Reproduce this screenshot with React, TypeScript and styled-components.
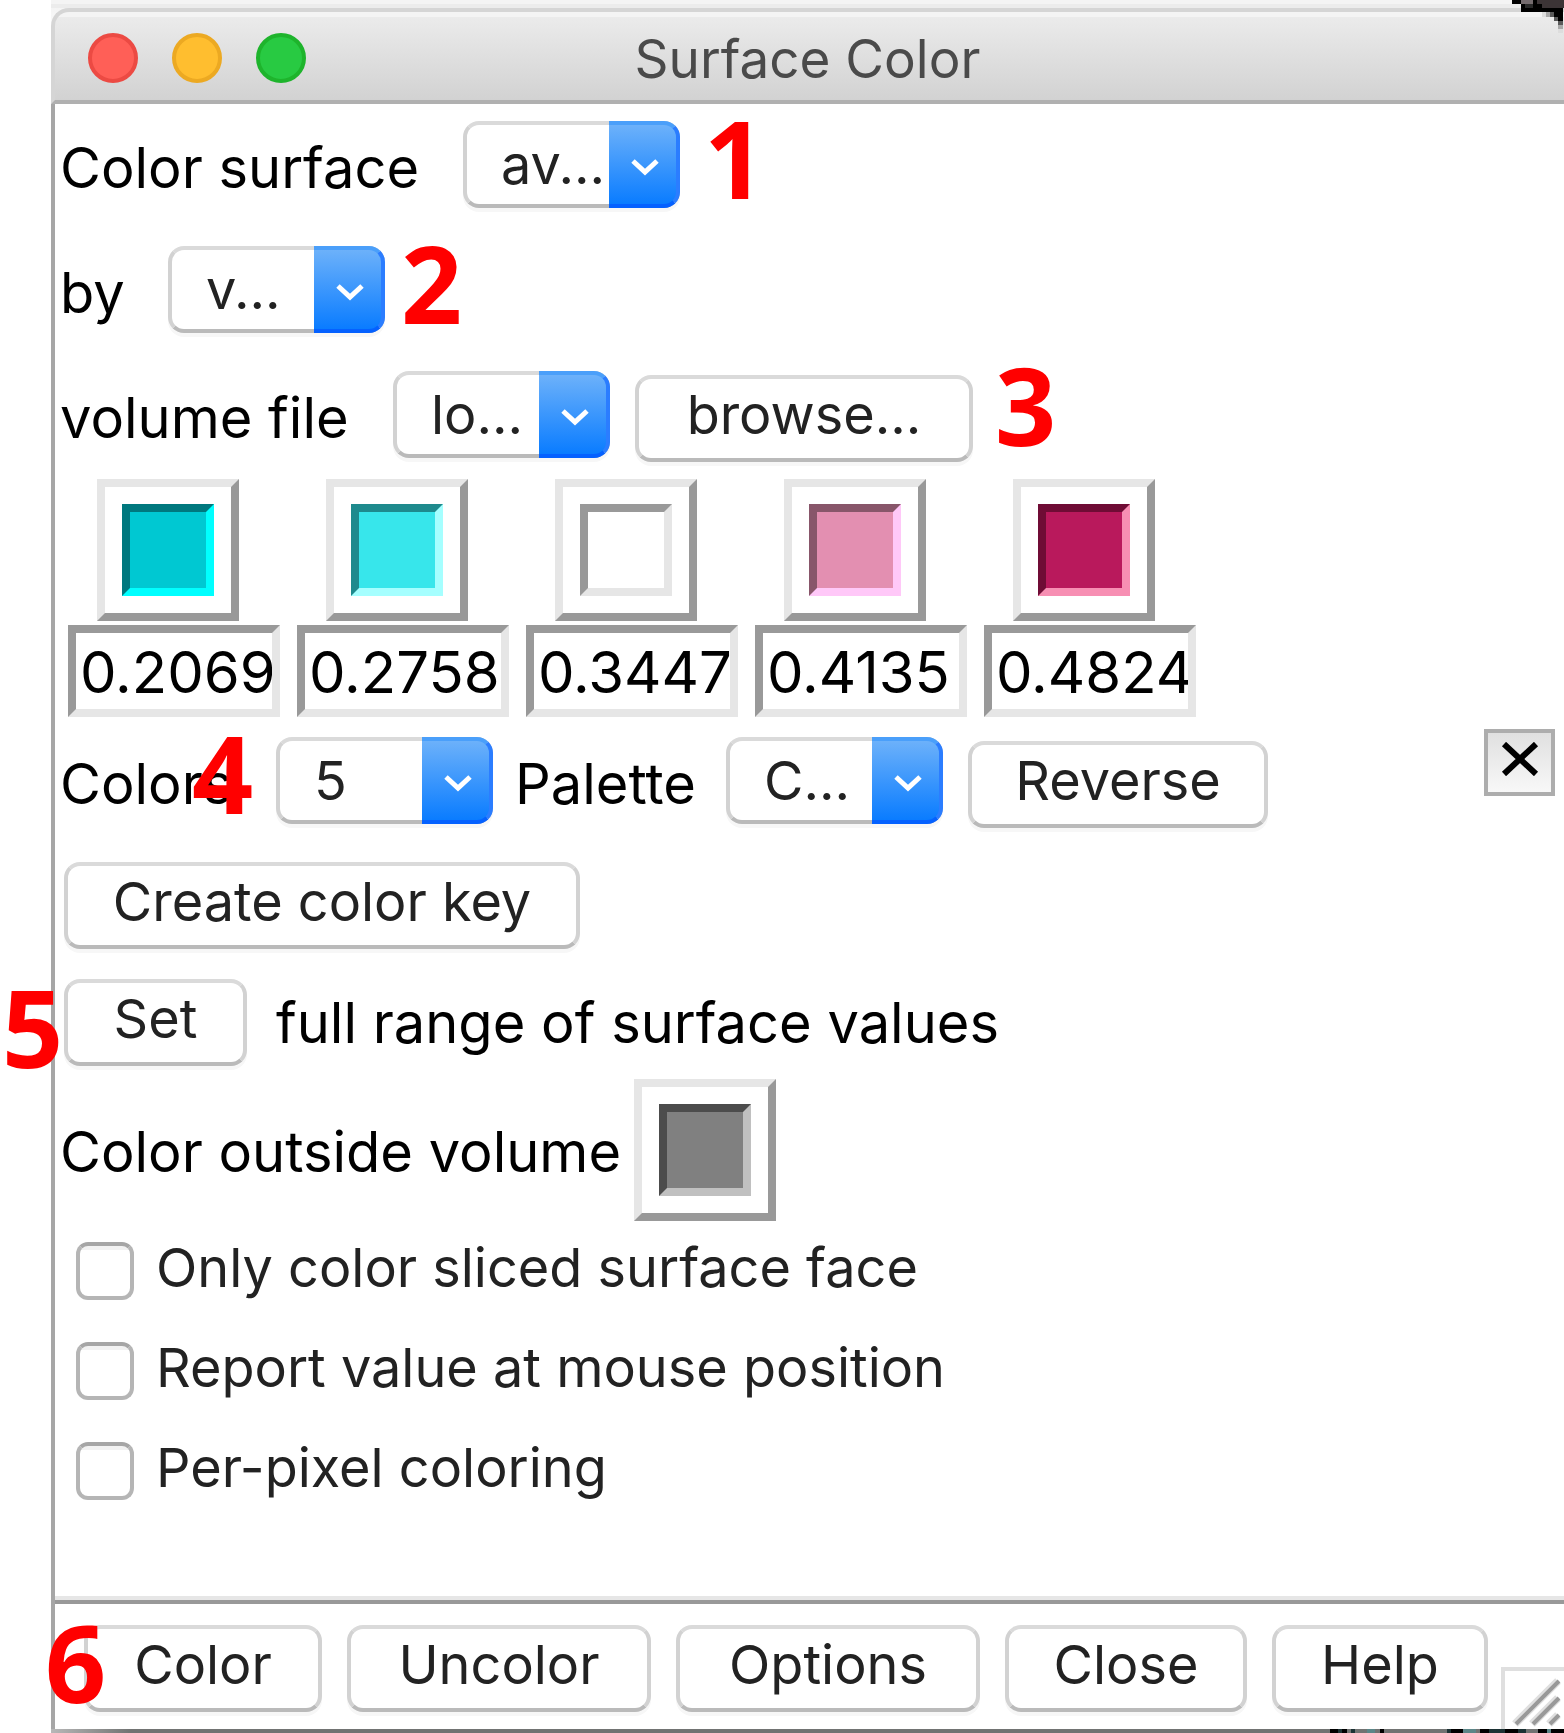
import React, { useState } from "react";
import styled, { createGlobalStyle } from "styled-components";

const GlobalStyle = createGlobalStyle`
  *, *::before, *::after { box-sizing: border-box; }
  body { margin: 0; background: #ffffff; }
  button, input, select { font: inherit; }
`;

const Page = styled.div`
  position: relative;
  overflow: hidden;
  min-height: 100vh;
  display: flex;
  padding-left: 51px;
  font-family: Inter, "Liberation Sans", sans-serif;
  font-size: 54px;
  line-height: 64px;
  color: #000000;
`;

const Window = styled.main`
  flex: 1;
  min-width: 0;
  display: flex;
  flex-direction: column;
  padding-top: 8px;
  background: linear-gradient(#f4f4f4 0 4px, #ececec 4px 8px, #f4f4f4 8px, #ffffff 40px);
`;

const TitleBar = styled.header`
  position: relative;
  display: flex;
  align-items: center;
  justify-content: center;
  height: 96px;
  padding: 6px 4px 0 0;
  border: 4px solid #d5d5d5;
  border-right: 0;
  border-bottom-color: #b0b0b0;
  border-radius: 18px 0 0 0;
  background: linear-gradient(#f4f4f4 0 5px, #ebebeb 5px, #d2d2d2);
`;

const Title = styled.h1`
  margin: 0;
  font-size: 53px;
  font-weight: 400;
  line-height: 64px;
  color: #4a4a4a;
`;

const Lights = styled.div`
  position: absolute;
  left: 33px;
  top: 21px;
  display: flex;
  gap: 34px;
`;

const Light = styled.button<{ $fill: string; $edge: string }>`
  width: 50px;
  height: 50px;
  padding: 0;
  border: 4px solid ${(p) => p.$edge};
  border-radius: 50%;
  background: ${(p) => p.$fill};
`;

const Body = styled.div`
  flex: 1;
  display: flex;
  flex-direction: column;
  border-left: 4px solid #a6a6a6;
  background: #ffffff;
`;

const Form = styled.form`
  flex: 1;
  display: flex;
  flex-direction: column;
  padding: 17px 9px 96px 2px;
`;

const Row = styled.div`
  display: flex;
  align-items: flex-start;
  min-height: 91px;
  margin-bottom: 34px;
`;

const Label = styled.label<{ $width?: number }>`
  flex: none;
  width: ${(p) => (p.$width ? `${p.$width}px` : "auto")};
  padding: 15px 0 0 3px;
  font-size: 56px;
  white-space: nowrap;
`;

const SelectBox = styled.div`
  position: relative;
  flex: none;
  width: 217px;
  height: 87px;
`;

const Select = styled.select`
  appearance: none;
  width: 100%;
  height: 100%;
  padding: 0 71px 0 34px;
  border: 4px solid #d2d2d2;
  border-top-color: #dadada;
  border-bottom-color: #bababa;
  border-radius: 16px;
  background: #ffffff;
  color: #222222;
  box-shadow: 0 4px 0 #f7f7f7;
`;

const Arrow = styled.span`
  position: absolute;
  top: 0;
  right: 0;
  width: 71px;
  height: 87px;
  display: flex;
  align-items: center;
  justify-content: center;
  padding: 4px 0 0 4px;
  border: 4px solid #2b7dff;
  border-top-color: #4a9ffa;
  border-bottom-color: #0561ff;
  border-left: 0;
  border-radius: 0 16px 16px 0;
  background: linear-gradient(#6cb1fa, #0a7cff);
  pointer-events: none;
`;

const PushButton = styled.button<{ $width: number }>`
  flex: none;
  align-self: flex-end;
  width: ${(p) => p.$width}px;
  height: 87px;
  padding: 0 0 8px;
  border: 4px solid #d2d2d2;
  border-top-color: #dadada;
  border-bottom-color: #bababa;
  border-radius: 16px;
  background: #ffffff;
  color: #222222;
  box-shadow: 0 4px 0 #f7f7f7;
  white-space: nowrap;
`;

const Spaced = styled.div`
  display: flex;
  margin-left: 25px;
  align-self: flex-end;
`;

const PaletteLabel = styled(Label)`
  margin-left: 19px;
`;

const CloseBox = styled.button`
  flex: none;
  display: grid;
  place-items: center;
  width: 71px;
  height: 67px;
  margin: -8px 0 0 auto;
  padding: 0 0 8px;
  border: 4px solid #adadad;
  background: linear-gradient(#e0e0e0, #f8f8f8);
`;

const Stops = styled.div`
  display: grid;
  grid-template-columns: repeat(5, 212px);
  gap: 17px;
  margin: -17px 0 20px 11px;
`;

const Stop = styled.div`
  display: flex;
  flex-direction: column;
  gap: 4px;
`;

const WellSlot = styled.div`
  display: flex;
  padding-left: 29px;
`;

const Well = styled.button`
  flex: none;
  width: 142px;
  height: 142px;
  padding: 17px;
  border: 8px solid;
  border-color: #e6e6e6 #999999 #999999 #e6e6e6;
  background: #ffffff;
`;

const Swatch = styled.span<{ $fill: string; $dark: string; $light: string }>`
  display: block;
  height: 100%;
  border: 8px solid;
  border-color: ${(p) => `${p.$dark} ${p.$light} ${p.$light} ${p.$dark}`};
  background: ${(p) => p.$fill};
`;

const Entry = styled.input`
  width: 100%;
  height: 92px;
  padding: 2px 0 0 4px;
  border: 8px solid;
  border-color: #999999 #e6e6e6 #e6e6e6 #999999;
  border-radius: 0;
  background: #ffffff;
  color: #000000;
  font-size: 58px;
  outline: 0;
`;

const ButtonRow = styled.div<{ $gap: number }>`
  display: flex;
  align-items: center;
  gap: 26px;
  height: 87px;
  margin-bottom: ${(p) => p.$gap}px;
  padding-left: 7px;
`;

const RangeLabel = styled(Label)`
  padding-top: 0;
`;

const WellRow = styled.div`
  display: flex;
  align-items: center;
  margin-bottom: 21px;
`;

const WellLabel = styled.span`
  width: 577px;
  padding: 4px 0 0 3px;
  font-size: 56px;
  white-space: nowrap;
`;

const Checks = styled.div`
  display: grid;
  gap: 42px;
  padding-left: 19px;
`;

const Check = styled.label`
  display: flex;
  align-items: center;
  gap: 22px;
  height: 58px;
  padding-bottom: 6px;
  color: #222222;
  white-space: nowrap;
`;

const Box = styled.input`
  appearance: none;
  flex: none;
  width: 58px;
  height: 58px;
  margin: 6px 0 0;
  border: 4px solid #b5b5b5;
  border-top-color: #a6a6a6;
  border-radius: 12px;
  background: linear-gradient(#f2f2f2 0 4px, #ffffff 4px);
  &:checked { background: #1680ff; }
`;

const Footer = styled.footer`
  position: relative;
  display: flex;
  gap: 25px;
  padding: 25px 0 17px 29px;
  border-top: 4px solid #e6e6e6;
  box-shadow: inset 0 4px 0 #999999;
`;

const Grip = styled.svg`
  position: absolute;
  right: 0;
  bottom: 0;
`;

const Edge = styled.svg`
  display: block;
  flex: none;
  width: 100%;
  height: 4px;
  background: linear-gradient(90deg, #b8b8b8, #717372 80px);
`;

const Corner = styled.svg`
  position: absolute;
  top: 0;
  right: 0;
`;

const Callout = styled.span<{ $x: number; $y: number }>`
  position: absolute;
  left: ${(p) => p.$x}px;
  top: ${(p) => p.$y}px;
  font-family: "Open Sans", "Noto Sans", sans-serif;
  font-size: 107px;
  font-weight: 700;
  line-height: 107px;
  color: #ff0000;
  pointer-events: none;
`;

const stops = [
  { value: "0.2069", fill: "#00c8d2", dark: "#00787e", light: "#00ffff" },
  { value: "0.2758", fill: "#37e6eb", dark: "#1e8a8d", light: "#a5ffff" },
  { value: "0.3447", fill: "#ffffff", dark: "#999999", light: "#e6e6e6" },
  { value: "0.4135", fill: "#e38fb1", dark: "#88566a", light: "#ffc8f8" },
  { value: "0.4824", fill: "#b9195c", dark: "#6f0c35", light: "#f78fb3" },
];

const callouts = [
  { n: 1, x: 704, y: 104 },
  { n: 2, x: 401, y: 229 },
  { n: 3, x: 995, y: 351 },
  { n: 4, x: 192, y: 719 },
  { n: 5, x: 2, y: 973 },
  { n: 6, x: 45, y: 1608 },
];

function Dropdown({ id, value }: { id: string; value: string }) {
  return (
    <SelectBox>
      <Select id={id} defaultValue={value}>
        <option>{value}</option>
      </Select>
      <Arrow aria-hidden="true">
        <svg width="30" height="18" viewBox="0 0 30 18">
          <path d="M3 3L15 14L27 3" fill="none" stroke="#ffffff" strokeWidth="5" />
        </svg>
      </Arrow>
    </SelectBox>
  );
}

function StopEditor({ stop, index }: { stop: (typeof stops)[number]; index: number }) {
  const [value, setValue] = useState(stop.value);
  return (
    <Stop>
      <WellSlot>
        <Well type="button" aria-label={`Color ${index + 1}`}>
          <Swatch $fill={stop.fill} $dark={stop.dark} $light={stop.light} />
        </Well>
      </WellSlot>
      <Entry aria-label={`Value ${index + 1}`} value={value} onChange={(e) => setValue(e.target.value)} />
    </Stop>
  );
}

export default function App() {
  return (
    <>
      <GlobalStyle />
      <Page>
        <Window>
          <TitleBar>
            <Lights>
              <Light aria-label="Close window" $fill="#ff5f57" $edge="#ec4a43" />
              <Light aria-label="Minimize window" $fill="#ffbe2f" $edge="#eca922" />
              <Light aria-label="Zoom window" $fill="#28ca42" $edge="#1eb42c" />
            </Lights>
            <Title>Surface Color</Title>
          </TitleBar>
          <Body>
            <Form onSubmit={(e) => e.preventDefault()}>
              <Row>
                <Label htmlFor="surface" $width={406}>Color surface</Label>
                <Dropdown id="surface" value="av..." />
              </Row>
              <Row>
                <Label htmlFor="method" $width={111}>by</Label>
                <Dropdown id="method" value="v..." />
              </Row>
              <Row>
                <Label htmlFor="volume" $width={336}>volume file</Label>
                <Dropdown id="volume" value="lo..." />
                <Spaced>
                  <PushButton type="button" $width={338}>browse...</PushButton>
                </Spaced>
              </Row>
              <Stops>
                {stops.map((stop, i) => (
                  <StopEditor key={stop.value} stop={stop} index={i} />
                ))}
              </Stops>
              <Row>
                <Label htmlFor="count" $width={219}>Colors</Label>
                <Dropdown id="count" value="5" />
                <PaletteLabel htmlFor="palette" $width={214}>Palette</PaletteLabel>
                <Dropdown id="palette" value="C..." />
                <Spaced>
                  <PushButton type="button" $width={300}>Reverse</PushButton>
                </Spaced>
                <CloseBox type="button" aria-label="Hide panel">
                  <svg width="38" height="34" viewBox="0 0 38 34">
                    <path d="M3 2L35 32M35 2L3 32" stroke="#000000" strokeWidth="6" />
                  </svg>
                </CloseBox>
              </Row>
              <ButtonRow $gap={30}>
                <PushButton type="button" $width={516}>Create color key</PushButton>
              </ButtonRow>
              <ButtonRow $gap={13}>
                <PushButton type="button" id="set-range" $width={183}>Set</PushButton>
                <RangeLabel htmlFor="set-range">full range of surface values</RangeLabel>
              </ButtonRow>
              <WellRow>
                <WellLabel>Color outside volume</WellLabel>
                <Well type="button" aria-label="Color outside volume">
                  <Swatch $fill="#808080" $dark="#4c4c4c" $light="#c0c0c0" />
                </Well>
              </WellRow>
              <Checks>
                <Check><Box type="checkbox" />Only color sliced surface face</Check>
                <Check><Box type="checkbox" />Report value at mouse position</Check>
                <Check><Box type="checkbox" />Per-pixel coloring</Check>
              </Checks>
            </Form>
            <Footer>
              <PushButton type="button" $width={238}>Color</PushButton>
              <PushButton type="button" $width={304}>Uncolor</PushButton>
              <PushButton type="button" $width={304}>Options</PushButton>
              <PushButton type="button" $width={242}>Close</PushButton>
              <PushButton type="button" $width={216}>Help</PushButton>
              <Grip width="63" height="62" viewBox="0 0 63 62" aria-hidden="true">
                <path d="M2 62V2H63" fill="none" stroke="#dfdfdf" strokeWidth="4" />
                <path d="M14 57L57 14M31 57L57 31M48 57L57 48" stroke="#dfdfdf" strokeWidth="8" />
                <path d="M15 57L58 14M32 57L58 31M49 57L58 48" stroke="#999999" strokeWidth="4" />
              </Grip>
            </Footer>
          </Body>
          <Edge viewBox="0 0 1513 4" preserveAspectRatio="xMaxYMid slice" aria-hidden="true">
            <path d="M1279 0h8v4h-8zM1291 0h5v4h-5zM1329 0h4v4h-4zM1400 0h12v4h-12zM1429 0h9v4h-9zM1454 0h13v4h-13zM1487 0h9v4h-9zM1500 0h13v4h-13z" fill="#000000" />
            <path d="M1287 0h4v4h-4zM1300 0h4v4h-4zM1396 0h4v4h-4zM1438 0h16v4h-16zM1467 0h8v4h-8z" fill="#1c3234" />
            <path d="M1316 0h8v4h-8zM1412 0h13v4h-13zM1496 0h4v4h-4z" fill="#5c8688" />
          </Edge>
        </Window>
        <Corner width="52" height="33" viewBox="0 0 52 33" shapeRendering="crispEdges" aria-hidden="true">
          <path d="M0 0H52V4H51V29H46V21H42V17H38V12H9V4H0Z" fill="#000000" />
          <path d="M9 0h12v4h-12z" fill="#746b6e" />
          <path d="M13 4h8v4h-8z" fill="#2a2a2a" />
          <path d="M25 0h27v4h-27zM30 4h22v4h-22z" fill="#3c3436" />
          <path d="M30 12h4v5h-4zM46 29h5v4h-5z" fill="#dddddd" />
          <path d="M34 12h4v5h-4zM46 25h5v4h-5z" fill="#a8a8a8" />
          <path d="M38 12h4v5h-4zM42 17h4v4h-4zM46 21h5v4h-5z" fill="#5a5a5a" />
        </Corner>
        {callouts.map((c) => (
          <Callout key={c.n} $x={c.x} $y={c.y}>{c.n}</Callout>
        ))}
      </Page>
    </>
  );
}
